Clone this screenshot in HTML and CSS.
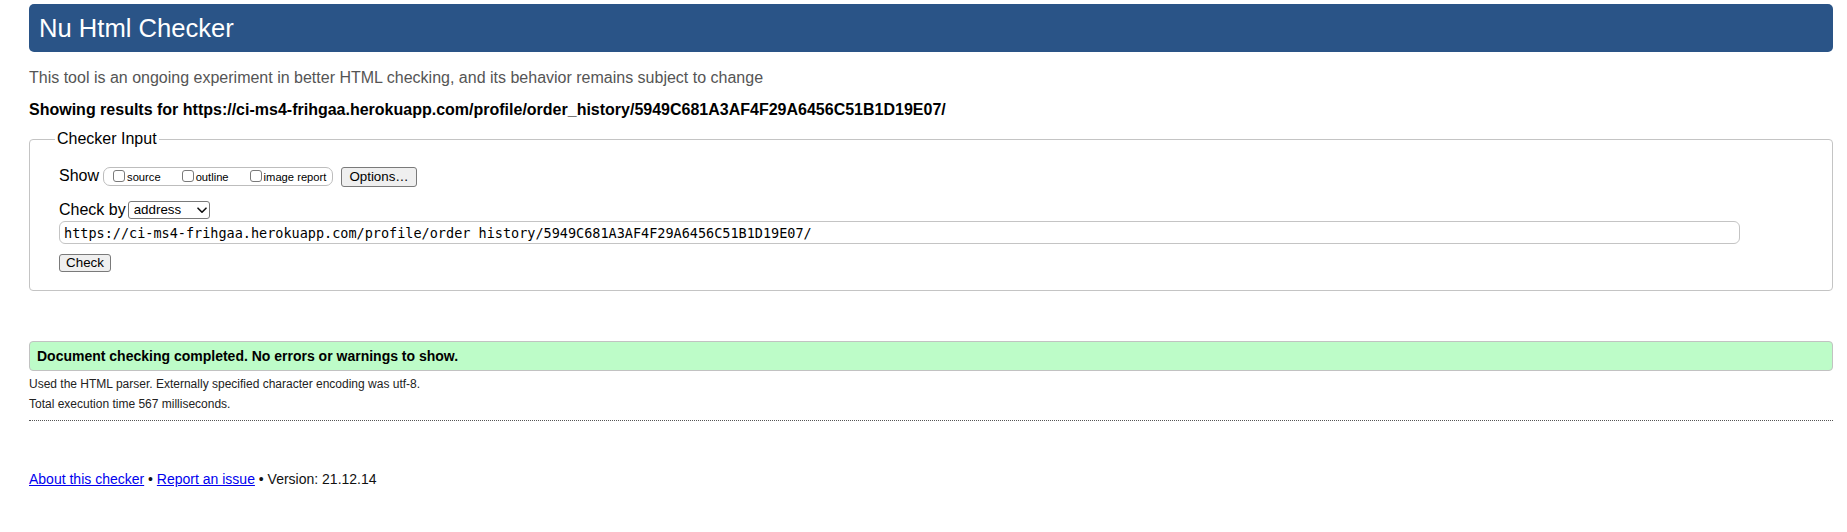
FILE: index.html
```html
<!DOCTYPE html>
<html lang="en">
<head>
<meta charset="utf-8">
<title>Nu Html Checker</title>
<link rel="stylesheet" href="styles.css">
</head>
<body>
<h1 class="title">Nu Html Checker</h1>
<p class="intro">This tool is an ongoing experiment in better HTML checking, and its behavior remains subject to change</p>
<p class="showing">Showing results for https://ci-ms4-frihgaa.herokuapp.com/profile/order_history/5949C681A3AF4F29A6456C51B1D19E07/</p>
<form class="checker">
  <fieldset class="checker-input">
    <legend class="legend">Checker Input</legend>
    <div class="show-row">
      <span class="row-label">Show</span>
      <span class="show-group">
        <label class="opt"><input type="checkbox" class="cb"><span>source</span></label>
        <label class="opt"><input type="checkbox" class="cb"><span>outline</span></label>
        <label class="opt"><input type="checkbox" class="cb"><span>image report</span></label>
      </span>
      <button type="button" class="btn btn-options">Options…</button>
    </div>
    <div class="by-row">
      <span class="row-label">Check by</span>
      <span class="select-wrap">
        <select class="by-select"><option>address</option></select>
        <svg class="chev" width="10" height="7" viewBox="0 0 10 7"><path d="M1 1.2 L5 5.2 L9 1.2" fill="none" stroke="#111" stroke-width="1.6" stroke-linecap="round" stroke-linejoin="round"/></svg>
      </span>
    </div>
    <input class="url" type="text" value="https://ci-ms4-frihgaa.herokuapp.com/profile/order_history/5949C681A3AF4F29A6456C51B1D19E07/">
    <div class="submit-row"><button type="button" class="btn btn-check">Check</button></div>
  </fieldset>
</form>
<p class="success">Document checking completed. No errors or warnings to show.</p>
<p class="details first">Used the HTML parser. Externally specified character encoding was utf-8.</p>
<p class="details second">Total execution time 567 milliseconds.</p>
<div class="rule"></div>
<p class="footer"><a href="#" class="link">About this checker</a> • <a href="#" class="link">Report an issue</a> • Version: 21.12.14</p>
</body>
</html>
```

FILE: styles.css
```css
html, body {
  background: #ffffff;
}
body {
  margin: 0;
  padding: 0 14px 40px 29px;
  font-family: "Liberation Sans", Arial, Helvetica, sans-serif;
  color: #000;
}
.title {
  margin: 4px 0 0;
  height: 48px;
  box-sizing: border-box;
  padding: 0 10px;
  display: flex;
  align-items: center;
  background: #2a5487;
  color: #fff;
  font-size: 25.6px;
  font-weight: normal;
  border-radius: 5px;
}
.intro {
  margin: 16px 0 0;
  font-size: 16px;
  line-height: 20px;
  color: #555;
}
.showing {
  margin: 12px 0 0;
  font-size: 16px;
  line-height: 20px;
  font-weight: bold;
}
.checker {
  margin: 9px 0 0;
}
.checker-input {
  margin: 0;
  border: 1px solid #c4c4c4;
  border-radius: 4px;
  padding: 18px 29px 18px 29px;
  min-width: 0;
}
.legend {
  font-size: 16px;
  line-height: 20px;
  padding: 0 2px;
  margin-left: -4px;
}
.show-row {
  display: flex;
  align-items: flex-start;
  height: 20px;
}
.row-label {
  font-size: 16px;
  line-height: 18px;
}
.show-group {
  margin-left: 4px;
  height: 19px;
  box-sizing: border-box;
  border: 1px solid #bdbdbd;
  border-radius: 7px;
  padding: 0 6px 0 5px;
  display: flex;
  align-items: center;
  font-size: 11.2px;
}
.opt {
  display: flex;
  align-items: center;
  margin-right: 17px;
}
.opt:last-child {
  margin-right: 0;
}
.cb {
  appearance: none;
  -webkit-appearance: none;
  width: 12px;
  height: 12px;
  margin: -2px 2px 0 4px;
  box-sizing: border-box;
  border: 1px solid #7a7a7a;
  border-radius: 3px;
  background: #fff;
}
.btn {
  font-family: "Liberation Sans", Arial, sans-serif;
  font-size: 13.33px;
  color: #000;
  background: #efefef;
  border: 1px solid #7a7a7a;
  border-radius: 3px;
  padding: 0 6px;
  line-height: 16px;
  box-sizing: border-box;
}
.btn-options {
  margin-left: 8px;
  height: 20px;
  padding: 0 7px;
}
.by-row {
  margin-top: 13px;
  display: flex;
  align-items: center;
  height: 20px;
}
.select-wrap {
  position: relative;
  margin-left: 2px;
  display: inline-flex;
}
.by-select {
  appearance: none;
  -webkit-appearance: none;
  width: 82px;
  height: 18px;
  box-sizing: border-box;
  border: 1px solid #7a7a7a;
  border-radius: 3px;
  background: #fff;
  padding: 0 0 0 5px;
  font-family: "Liberation Sans", Arial, sans-serif;
  font-size: 13.33px;
  color: #000;
  line-height: 16px;
}
.chev {
  position: absolute;
  right: 3px;
  top: 6px;
  pointer-events: none;
}
.url {
  display: block;
  margin: 1px 0 0;
  width: 1681px;
  height: 23px;
  box-sizing: border-box;
  border: 1px solid #c4c4c4;
  border-radius: 6px;
  padding: 0 4px;
  font-family: "DejaVu Sans Mono", Menlo, monospace;
  font-size: 13.5px;
  line-height: 19px;
  color: #000;
  background: #fff;
}
.submit-row {
  margin-top: 10px;
  display: flex;
}
.btn-check {
  height: 18px;
  width: 52px;
  padding: 0;
}
.success {
  margin: 50px 0 0;
  height: 30px;
  box-sizing: border-box;
  border: 1px solid #c2c2c2;
  border-radius: 4px;
  background: #bdfcc8;
  padding: 0 7px;
  font-size: 14px;
  line-height: 28px;
  font-weight: bold;
}
.details {
  margin: 0;
  font-size: 12px;
  line-height: 17px;
  color: #222;
}
.details.first {
  margin-top: 5px;
}
.details.second {
  margin-top: 3px;
}
.rule {
  margin-top: 7px;
  border-top: 1px dotted #555;
}
.footer {
  margin: 48px 0 0;
  font-size: 14px;
  line-height: 20px;
  color: #111;
}
.link {
  color: #0000ee;
  text-decoration: underline;
}
```
